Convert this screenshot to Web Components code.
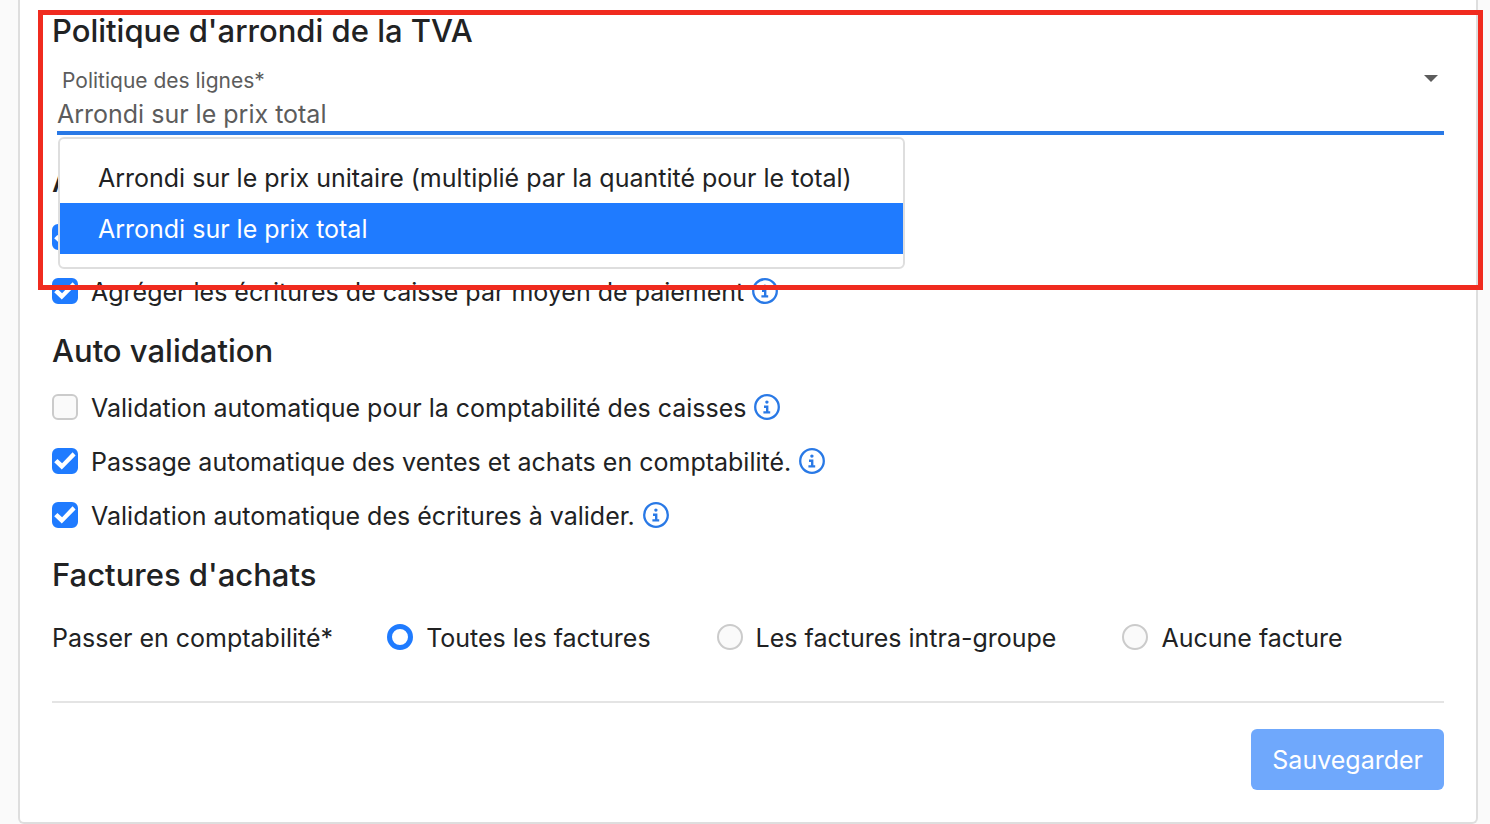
<!DOCTYPE html>
<html lang="fr">
<head>
<meta charset="utf-8">
<meta name="viewport" content="width=device-width, initial-scale=1">
<title>Paramètres de comptabilité</title>
<style>
  body {
    margin: 0;
    background: #fafafa;
    color: #212223;
    font: 25px/32px Inter, "Liberation Sans", sans-serif;
    --accent: #1f7bff;
    --line: #2979e6;
    --border: #dedede;
    --control-border: #cbcbcb;
  }
</style>
</head>
<body>
<settings-page>
  <settings-card>
    <settings-section heading="Politique d'arrondi de la TVA">
      <policy-select label="Politique des lignes*"></policy-select>
    </settings-section>
    <settings-section heading="A">
      <check-option checked></check-option>
      <check-option label="Agréger les écritures de caisse par moyen de paiement" checked info></check-option>
    </settings-section>
    <settings-section heading="Auto validation">
      <check-option label="Validation automatique pour la comptabilité des caisses" info></check-option>
      <check-option label="Passage automatique des ventes et achats en comptabilité." checked info></check-option>
      <check-option label="Validation automatique des écritures à valider." checked info></check-option>
    </settings-section>
    <settings-section heading="Factures d'achats">
      <radio-choices legend="Passer en comptabilité*" options="Toutes les factures|Les factures intra-groupe|Aucune facture"></radio-choices>
    </settings-section>
    <save-button slot="actions">Sauvegarder</save-button>
  </settings-card>
  <focus-frame slot="overlay"></focus-frame>
</settings-page>

<script>
const define = (name, html, setup) => {
  const template = document.createElement('template');
  template.innerHTML = html;
  customElements.define(name, class extends HTMLElement {
    connectedCallback() {
      if (this.shadowRoot) return;
      const root = this.attachShadow({ mode: 'open' });
      root.append(template.content.cloneNode(true));
      if (setup) setup(this, root);
    }
  });
};

define('settings-page', `
  <style>
    :host { display: block; position: relative; padding: 0 12px 0 18px; }
  </style>
  <main><slot></slot></main>
  <slot name="overlay"></slot>`);

define('settings-card', `
  <style>
    :host {
      display: block; box-sizing: border-box; padding: 11px 32px 32px;
      background: #fff; border: 2px solid var(--border); border-top: 0;
      border-radius: 0 0 6px 6px;
    }
    .sections { display: flex; flex-direction: column; gap: 13px; }
    footer {
      display: flex; justify-content: flex-end; margin-top: 31px;
      padding-top: 26px; border-top: 2px solid #e4e4e4;
    }
  </style>
  <div class="sections"><slot></slot></div>
  <footer><slot name="actions"></slot></footer>`);

define('settings-section', `
  <style>
    :host { display: block; }
    h2 { margin: 0 0 9px; font-size: 31px; line-height: 40px; font-weight: 500; }
  </style>
  <section><h2></h2><slot></slot></section>`, (host, root) => {
  root.querySelector('h2').textContent = host.getAttribute('heading');
});

define('policy-select', `
  <style>
    :host { display: block; position: relative; margin-left: 5px; padding-bottom: 13px; color: #5c5c5c; }
    .field { display: grid; border-bottom: 4px solid var(--line); padding-top: 7px; }
    .top { display: flex; justify-content: space-between; align-items: flex-start; padding: 0 6px 0 5px; }
    label { font-size: 21px; line-height: 28px; }
    svg { display: block; width: 14px; height: 8px; margin-top: 8px; }
    select {
      appearance: none; width: 100%; height: 36px; margin: 0; padding: 1px 0 0; border: 0;
      outline: 0; background: none; color: inherit; font: inherit;
    }
    ul {
      position: absolute; top: 77px; left: 1px; z-index: 2; margin: 0; padding: 13px 0;
      list-style: none; background: #fff; color: #212223;
      border: 2px solid var(--border); border-radius: 6px;
    }
    li { padding: 2px 51px 0 38px; line-height: 49px; white-space: nowrap; cursor: pointer; }
    li[aria-selected="true"] { background: var(--accent); color: #fff; }
  </style>
  <div class="field">
    <div class="top">
      <label for="policy"></label>
      <svg viewBox="0 0 14 8" aria-hidden="true"><path d="M0 0h14L7 7z" fill="#5c5c5c"/></svg>
    </div>
    <select id="policy">
      <option>Arrondi sur le prix unitaire (multiplié par la quantité pour le total)</option>
      <option selected>Arrondi sur le prix total</option>
    </select>
  </div>
  <ul role="listbox">
    <li role="option" aria-selected="false">Arrondi sur le prix unitaire (multiplié par la quantité pour le total)</li>
    <li role="option" aria-selected="true">Arrondi sur le prix total</li>
  </ul>`, (host, root) => {
  root.querySelector('label').textContent = host.getAttribute('label');
  root.querySelector('ul').setAttribute('aria-label', host.getAttribute('label'));
  const select = root.querySelector('select');
  const items = [...root.querySelectorAll('li')];
  const pick = index => {
    select.selectedIndex = index;
    items.forEach((item, i) => item.setAttribute('aria-selected', String(i === index)));
  };
  items.forEach((item, i) => item.addEventListener('click', () => pick(i)));
  select.addEventListener('change', () => pick(select.selectedIndex));
});

define('info-icon', `
  <style>
    :host { display: block; flex: none; width: 26px; height: 26px; color: var(--line); }
    svg { display: block; }
  </style>
  <svg width="26" height="26" viewBox="0 0 26 26" fill="none" stroke="currentColor" role="img" aria-label="Information">
    <circle cx="13" cy="13" r="11.8" stroke-width="2.3"/>
    <circle cx="12.9" cy="8.1" r="1.7" fill="currentColor" stroke="none"/>
    <path d="M10 12.7h3.2v5.6M9.4 18.4h6.8" stroke-width="2.4"/>
  </svg>`);

define('check-option', `
  <style>
    :host { display: flex; align-items: center; height: 54px; gap: 8px; }
    label { display: flex; align-items: center; gap: 13px; white-space: nowrap; }
    .text { padding-top: 2px; }
    .box { display: grid; }
    .box > * { grid-area: 1 / 1; }
    input {
      appearance: none; box-sizing: border-box; width: 26px; height: 26px; margin: 0;
      border: 2px solid var(--control-border); border-radius: 6px; background: #fafafa;
    }
    input:checked { border-color: var(--accent); background: var(--accent); }
    svg { display: none; pointer-events: none; }
    input:checked + svg { display: block; }
  </style>
  <label>
    <span class="box">
      <input type="checkbox">
      <svg width="26" height="26" viewBox="0 0 26 26" aria-hidden="true"><path d="M2.2 14.2L5.4 11.1L10.1 15.2L20.6 4.2L23.6 7.5L9.8 21.6z" fill="#fff"/></svg>
    </span>
    <span class="text"></span>
  </label>
  <info-icon></info-icon>`, (host, root) => {
  root.querySelector('.text').textContent = host.getAttribute('label') || '';
  root.querySelector('input').checked = host.hasAttribute('checked');
  if (!host.hasAttribute('info')) root.querySelector('info-icon').remove();
});

define('radio-choices', `
  <style>
    :host { display: block; }
    .group { display: flex; align-items: center; height: 66px; gap: 54px; white-space: nowrap; }
    .choices { display: flex; gap: 66px; }
    #legend, .text { padding-top: 2px; }
    label { display: flex; align-items: center; gap: 13px; }
    input {
      appearance: none; box-sizing: border-box; width: 26px; height: 26px; margin: 0;
      border: 2px solid var(--control-border); border-radius: 50%; background: #fafafa;
    }
    input:checked { border: 5px solid var(--accent); background: #fff; }
  </style>
  <div class="group" role="radiogroup" aria-labelledby="legend">
    <span id="legend"></span>
    <div class="choices"></div>
  </div>`, (host, root) => {
  root.querySelector('#legend').textContent = host.getAttribute('legend');
  host.getAttribute('options').split('|').forEach((option, i) => {
    const label = document.createElement('label');
    const input = document.createElement('input');
    const text = document.createElement('span');
    input.type = 'radio';
    input.name = 'invoices';
    input.checked = i === 0;
    text.className = 'text';
    text.textContent = option;
    label.append(input, text);
    root.querySelector('.choices').append(label);
  });
});

define('save-button', `
  <style>
    :host { display: block; }
    button {
      display: block; height: 61px; margin: 0; padding: 0 21px; border: 0; border-radius: 6px;
      background: #6fa8fc; color: #fff; font: inherit;
    }
  </style>
  <button type="button"><slot></slot></button>`);

define('focus-frame', `
  <style>
    :host {
      display: block; position: absolute; z-index: 3; box-sizing: border-box;
      top: 10px; left: 38px; right: 7px; height: 280px;
      border: 5px solid #f02b1f; pointer-events: none;
    }
  </style>`);
</script>
</body>
</html>
